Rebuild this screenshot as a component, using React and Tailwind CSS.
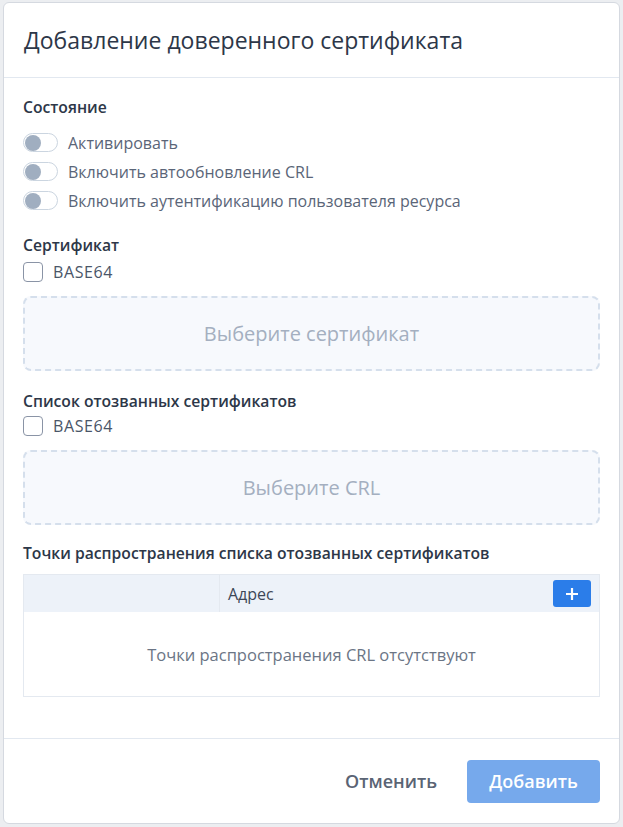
const Toggle = ({ label }) => (
  <label className="flex items-center gap-[10px] h-[29px]">
    <span className="w-[35px] h-[19px] rounded-full border border-[#cbd5e0] bg-white flex items-center px-[1px]">
      <span className="w-[16px] h-[16px] rounded-full bg-[#a0aec0]" />
    </span>
    <span className="text-[16px] font-medium text-[#5a6578]">{label}</span>
  </label>
);

const Checkbox = ({ label, className = "mt-[3px]" }) => (
  <label className={`flex items-center gap-[10px] h-[28px] ${className}`}>
    <span className="w-[20px] h-[20px] rounded-[4px] border-[1.5px] border-[#8a94a6] bg-white" />
    <span className="text-[16px] font-medium tracking-[0.6px] text-[#4a5568]">{label}</span>
  </label>
);

const DropZone = ({ text }) => (
  <div className="mt-[10px] h-[75px] rounded-[8px] border-2 border-dashed border-[#d5dfec] bg-[#f7f9fd] flex items-center justify-center">
    <span className="text-[20px] text-[#a4afc0]">{text}</span>
  </div>
);

const Heading = ({ children, className = "" }) => (
  <h2 className={`text-[15.7px] font-semibold text-[#2d3748] leading-[20px] ${className}`}>{children}</h2>
);

export default function App() {
  return (
    <div
      className="min-h-screen bg-[#eceef1] pt-[2px] px-[3px]"
      style={{ fontFamily: '"Open Sans", "Noto Sans", sans-serif' }}
    >
      <div className="bg-white rounded-[6px] border border-[#d5d9e0] h-[822px] flex flex-col">
        <div className="h-[75px] px-[20px] flex items-center border-b border-[#e2e8f0]">
          <h1 className="text-[23px] text-[#2d3748]">Добавление доверенного сертификата</h1>
        </div>

        <div className="flex-1 px-[19px] pt-[19px]">
          <Heading>Состояние</Heading>
          <div className="mt-[11px] flex flex-col">
            <Toggle label="Активировать" />
            <Toggle label="Включить автообновление CRL" />
            <Toggle label="Включить аутентификацию пользователя ресурса" />
          </div>

          <Heading className="mt-[20px]">Сертификат</Heading>
          <Checkbox label="BASE64" />
          <DropZone text="Выберите сертификат" />

          <Heading className="mt-[20px]">Список отозванных сертификатов</Heading>
          <Checkbox label="BASE64" className="mt-[1px]" />
          <DropZone text="Выберите CRL" />

          <Heading className="mt-[18px]">Точки распространения списка отозванных сертификатов</Heading>
          <div className="mt-[11px] border border-[#e4e9f0]">
            <div className="h-[37px] bg-[#edf2f9] flex items-center">
              <div className="w-[196px] h-full border-r border-[#e4e9f0]" />
              <div className="flex-1 pl-[8px] text-[16px] font-medium text-[#3d4757]">Адрес</div>
              <button className="mr-[8px] w-[38px] h-[27px] rounded-[3px] bg-[#2b7de9] flex items-center justify-center">
                <svg width="14" height="14" viewBox="0 0 14 14">
                  <path d="M7 1v12M1 7h12" stroke="white" strokeWidth="2.2" />
                </svg>
              </button>
            </div>
            <div className="h-[84px] pt-[2px] flex items-center justify-center text-[16.5px] text-[#6b7585]">
              Точки распространения CRL отсутствуют
            </div>
          </div>
        </div>

        <div className="h-[85px] border-t border-[#e2e8f0] flex items-center justify-end px-[19px] gap-[30px]">
          <button className="text-[18px] font-semibold text-[#5a6474]">Отменить</button>
          <button className="w-[133px] h-[43px] rounded-[4px] bg-[#76a9ec] text-white text-[18px] font-semibold">
            Добавить
          </button>
        </div>
      </div>
    </div>
  );
}
